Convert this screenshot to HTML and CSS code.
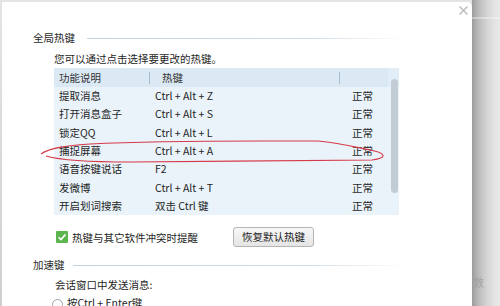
FILE: index.html
```html
<!DOCTYPE html>
<html lang="zh">
<head>
<meta charset="utf-8">
<title>热键设置</title>
<link rel="stylesheet" href="styles.css">
</head>
<body>
<div class="screen">
  <div class="dialog">
    <div class="titlebar">
      <span class="close"><svg width="9" height="9" viewBox="0 0 9 9"><path d="M0.5 0.5 L8.5 8.5 M8.5 0.5 L0.5 8.5" stroke="#b9b9b9" stroke-width="1.4"/></svg></span>
    </div>
    <section class="group">
      <div class="group-title"><span>全局热键</span><i class="rule"></i></div>
      <div class="group-body">
        <p class="hint">您可以通过点击选择要更改的热键。</p>
        <div class="table">
          <div class="list">
            <div class="row head"><span class="c1">功能说明</span><span class="c2">热键</span><span class="c3"></span></div>
            <div class="row"><span class="c1">提取消息</span><span class="c2">Ctrl + Alt + Z</span><span class="c3">正常</span></div>
            <div class="row"><span class="c1">打开消息盒子</span><span class="c2">Ctrl + Alt + S</span><span class="c3">正常</span></div>
            <div class="row"><span class="c1">锁定QQ</span><span class="c2">Ctrl + Alt + L</span><span class="c3">正常</span></div>
            <div class="row"><span class="c1">捕捉屏幕</span><span class="c2">Ctrl + Alt + A</span><span class="c3">正常</span></div>
            <div class="row"><span class="c1">语音按键说话</span><span class="c2">F2</span><span class="c3">正常</span></div>
            <div class="row"><span class="c1">发微博</span><span class="c2">Ctrl + Alt + T</span><span class="c3">正常</span></div>
            <div class="row"><span class="c1">开启划词搜索</span><span class="c2">双击 Ctrl 键</span><span class="c3">正常</span></div>
          </div>
          <div class="vscroll"><div class="thumb"></div></div>
        </div>
        <div class="actions">
          <label class="check">
            <svg width="12" height="12" viewBox="0 0 12 12"><rect x="0" y="0" width="12" height="12" rx="1" fill="#5cb54f"/><path d="M2.6 6.2 L5 8.6 L9.6 3.4" fill="none" stroke="#fff" stroke-width="1.6"/></svg>
            <span>热键与其它软件冲突时提醒</span>
          </label>
          <button class="btn">恢复默认热键</button>
        </div>
      </div>
    </section>
    <section class="group accel">
      <div class="group-title"><span>加速键</span><i class="rule"></i></div>
      <div class="group-body">
        <p class="prompt">会话窗口中发送消息:</p>
        <label class="radio"><i class="dot"></i><span>按Ctrl + Enter键</span></label>
      </div>
    </section>
  </div>
  <div class="side"><span class="ghost">数</span></div>
  <svg class="annot" width="500" height="306" viewBox="0 0 500 306">
    <path d="M41 154 C48 149, 60 146, 90 144 C130 142, 200 141, 260 141 L318 141 C340 143, 355 147, 370 150 C386 153, 388 158, 372 160 C330 161, 200 161, 130 162 C90 162, 60 160, 46 156" fill="none" stroke="#d63a48" stroke-width="1.1"/>
  </svg>
</div>
</body>
</html>
```

FILE: styles.css
```css
* { box-sizing: border-box; }
html, body { margin: 0; padding: 0; }
body {
  font-family: "Noto Sans CJK SC", "Noto Sans", sans-serif;
  font-size: 10.5px;
  color: #1f1f1f;
  background: #d2d2d2;
}
.screen {
  position: relative;
  width: 500px;
  height: 306px;
  overflow: hidden;
  display: flex;
  background: linear-gradient(#e4e4e4, #cfcfcf);
}
.dialog {
  width: 470px;
  margin: 2px 0 0 2px;
  background: #fff;
  border-radius: 0 5px 0 0;
  flex: none;
}
.titlebar {
  height: 29px;
  display: flex;
  justify-content: flex-end;
  align-items: flex-start;
  padding: 4px 4px 0 0;
}
.close { display: block; width: 9px; height: 9px; line-height: 0; }
.group-title {
  display: flex;
  align-items: center;
  padding-left: 31px;
  line-height: 14px;
  height: 14px;
  color: #2a2a2a;
}
.rule {
  flex: 1;
  height: 1px;
  margin-left: 12px;
  margin-right: 64px;
  background: linear-gradient(to right, #c3d0dc, #d3dde6 70%, rgba(230,236,242,0));
}
.accel .rule { margin-left: 8px; }
.group-body { padding-left: 52px; }
.hint { margin: 7px 0 0; line-height: 14px; }
.table {
  margin-top: 2px;
  width: 345px;
  display: flex;
  background: #eaf3fa;
}
.list { flex: 1; }
.row {
  display: grid;
  grid-template-columns: 95px 190px 1fr;
  height: 18.33px;
  line-height: 18.33px;
  white-space: nowrap;
}
.row.head {
  height: 19px;
  line-height: 19px;
  background: #dbe9f4;
  color: #333;
}
.c1 { padding-left: 5px; }
.c2 { padding-left: 6px; }
.c3 { padding-left: 13px; }
.head .c2 {
  padding-left: 13px;
  background: linear-gradient(#a9bccd, #a9bccd) left center / 1px 12px no-repeat;
}
.head .c3 {
  background: linear-gradient(#a9bccd, #a9bccd) left center / 1px 12px no-repeat;
}
.vscroll {
  width: 11px;
  background: linear-gradient(#e2eef7 0, #e2eef7 19px, #eaf3fa 19px);
}
.thumb {
  margin: 11px 0 0 3px;
  width: 7px;
  height: 114px;
  border-radius: 4px;
  background: #c3ccd4;
}
.actions {
  margin-top: 12px;
  height: 20px;
  display: flex;
  align-items: center;
}
.check {
  display: flex;
  align-items: center;
  margin-left: 2px;
  width: 177px;
}
.check svg { display: block; }
.check span { margin-left: 4px; }
.btn {
  font: inherit;
  color: #222;
  width: 81px;
  height: 20px;
  padding: 0;
  border: 1px solid #b4b4b4;
  border-radius: 3px;
  background: linear-gradient(#f7f7f7, #e5e5e5);
  line-height: 18px;
}
.accel { margin-top: 11px; }
.prompt { margin: 6px 0 0 1px; line-height: 14px; }
.radio {
  display: flex;
  align-items: center;
  margin-top: 4px;
  margin-left: -2px;
  line-height: 14px;
}
.dot {
  width: 11px;
  height: 11px;
  border-radius: 50%;
  border: 1px solid #9aa3ab;
  background: #fff;
  margin-top: 3px;
}
.radio span { margin-left: 4px; }
.side {
  flex: 1;
  background:
    linear-gradient(rgba(255,255,255,0) 17px, rgba(255,255,255,0.35) 17px, rgba(255,255,255,0.35) 19px, rgba(255,255,255,0) 19px),
    linear-gradient(to right, #9c9c9c 0, #b9b9b9 6px, #d2d2d2 14px, #e3e3e3 22px, #e9e9e9 28px);
  padding: 275px 0 0 1px;
}
.ghost {
  color: #a3a3a3;
  font-size: 11px;
  line-height: 14px;
}
.annot {
  position: absolute;
  left: 0;
  top: 0;
  pointer-events: none;
}
```
